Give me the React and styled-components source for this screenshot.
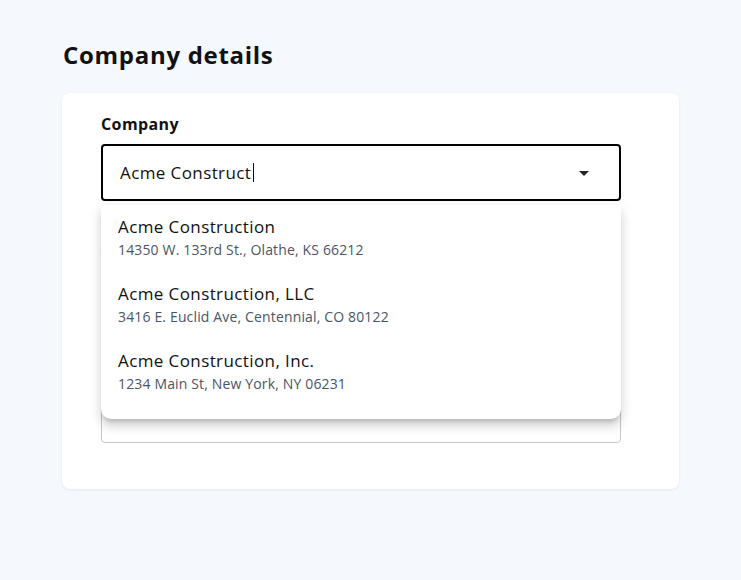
import styled, { createGlobalStyle } from "styled-components";

const GlobalStyle = createGlobalStyle`
  body {
    margin: 0;
    background: #f5f8fc;
    font-family: "Open Sans", "Liberation Sans", sans-serif;
    color: #111;
  }
`;

const Page = styled.div`
  padding: 39px 62px 60px;
  min-height: 580px;
  box-sizing: border-box;
`;

const Title = styled.h1`
  margin: 0 0 22px 1px;
  font-size: 24px;
  line-height: 32px;
  font-weight: 700;
  letter-spacing: 0.7px;
`;

const Card = styled.div`
  background: #fff;
  border-radius: 8px;
  box-shadow: 0 1px 3px rgba(30, 50, 90, 0.08);
  width: 617px;
  padding: 19px 58px 46px 39px;
  box-sizing: border-box;
  display: flex;
  flex-direction: column;
  gap: 32px;
`;

const Field = styled.div`
  position: relative;
  display: flex;
  flex-direction: column;
  gap: 8px;
`;

const Label = styled.label`
  font-size: 16px;
  line-height: 24px;
  font-weight: 700;
  letter-spacing: 0.4px;
`;

const InputBox = styled.div`
  height: 57px;
  box-sizing: border-box;
  border: ${(p) => (p.$focused ? "2px solid #000" : "1px solid #c8c8c8")};
  border-radius: 4px;
  display: flex;
  align-items: center;
  padding: 0 30px 0 ${(p) => (p.$focused ? "17px" : "18px")};
  font-size: 17px;
  letter-spacing: 0.4px;
`;

const Value = styled.span`
  flex: 1;
  display: flex;
  align-items: center;
`;

const Caret = styled.span`
  display: inline-block;
  width: 1px;
  height: 19px;
  background: #111;
  margin-left: 2px;
`;

const Arrow = styled.span`
  width: 0;
  height: 0;
  border-left: 5px solid transparent;
  border-right: 5px solid transparent;
  border-top: 5px solid #222;
  margin-top: 2px;
`;

const Menu = styled.ul`
  position: absolute;
  top: calc(100% + 4px);
  left: 0;
  right: 0;
  margin: 0;
  padding: 0 0 13px;
  list-style: none;
  background: #fff;
  border-radius: 4px 4px 10px 10px;
  box-shadow: 0 5px 5px -3px rgba(0, 0, 0, 0.2),
    0 8px 10px 1px rgba(0, 0, 0, 0.1), 0 3px 14px 2px rgba(0, 0, 0, 0.06);
  z-index: 2;
`;

const Option = styled.li`
  padding: 10px 17px 11px;
`;

const OptionName = styled.div`
  font-size: 17px;
  line-height: 23px;
  letter-spacing: 0.4px;
  color: #111;
`;

const OptionAddress = styled.div`
  margin-top: 1px;
  font-size: 14px;
  line-height: 22px;
  letter-spacing: 0.15px;
  color: #4b5565;
`;

const companies = [
  { name: "Acme Construction", address: "14350 W. 133rd St., Olathe, KS 66212" },
  { name: "Acme Construction, LLC", address: "3416 E. Euclid Ave, Centennial, CO 80122" },
  { name: "Acme Construction, Inc.", address: "1234 Main St, New York, NY 06231" },
];

export default function App() {
  return (
    <>
      <GlobalStyle />
      <Page>
        <Title>Company details</Title>
        <Card>
          <Field>
            <Label>Company</Label>
            <InputBox $focused>
              <Value>
                Acme Construct
                <Caret />
              </Value>
              <Arrow />
            </InputBox>
            <Menu>
              {companies.map((c) => (
                <Option key={c.name}>
                  <OptionName>{c.name}</OptionName>
                  <OptionAddress>{c.address}</OptionAddress>
                </Option>
              ))}
            </Menu>
          </Field>
          <Field>
            <Label>Address</Label>
            <InputBox />
          </Field>
          <Field>
            <Label>Phone</Label>
            <InputBox />
          </Field>
        </Card>
      </Page>
    </>
  );
}
